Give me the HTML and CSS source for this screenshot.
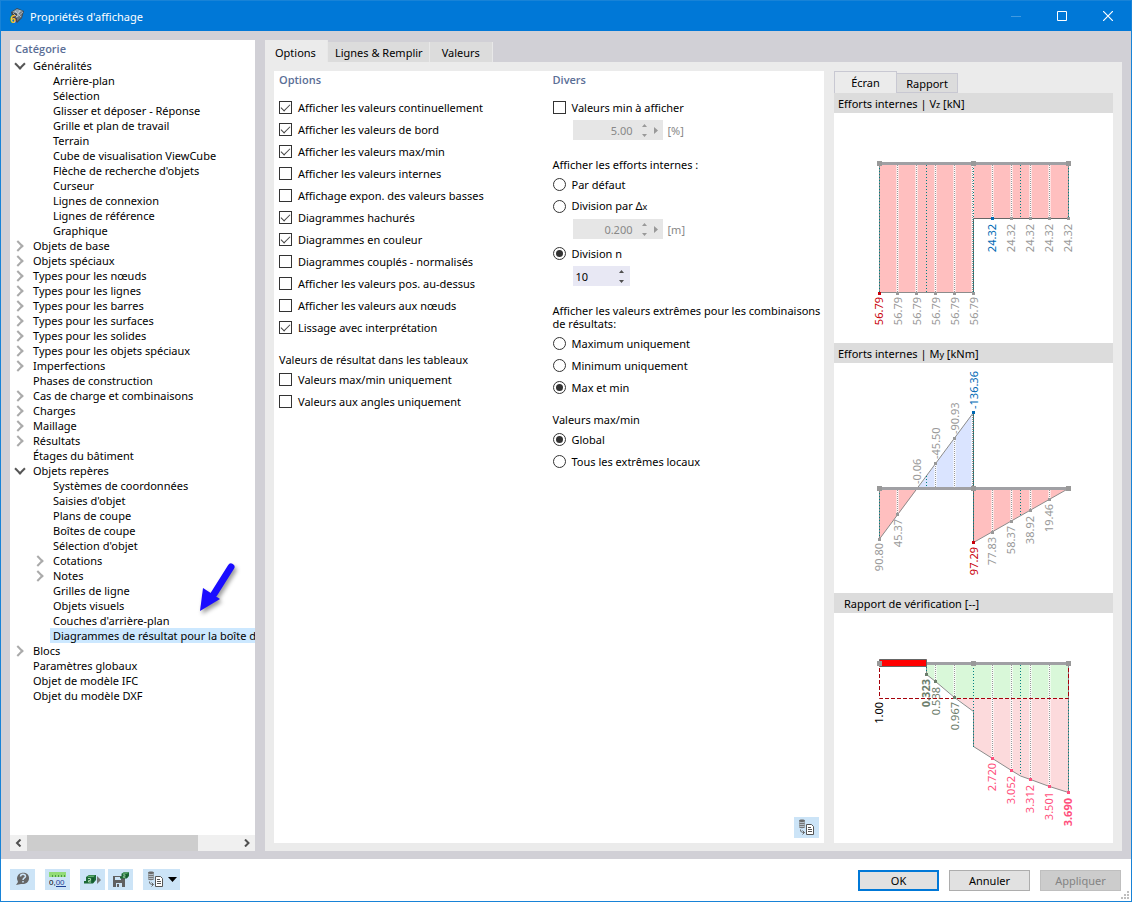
FILE: index.html
```html
<!DOCTYPE html>
<html lang="fr">
<head>
<meta charset="utf-8">
<title>Propriétés d'affichage</title>
<link rel="stylesheet" href="styles.css">
</head>
<body>
<svg class="sprites" aria-hidden="true">
  <symbol id="copy" viewBox="0 0 17 17">
    <path d="M1 1.500C1 0 7 0 7 1.500V8C7 9.500 1 9.500 1 8z" fill="#6a6a6a"/>
    <path d="M1 3q3 1.500 6 0M1 5q3 1.500 6 0M1 7q3 1.500 6 0" stroke="#d5e6f3" stroke-width=".8" fill="none"/>
    <path d="M2.500 10.500c0 2.500 1 3 4 3M4.500 11.500l2 2-2 2" fill="none" stroke="#666"/>
    <path d="M8.500 5.500h5l2 2v8h-7z" fill="#fff" stroke="#555"/>
    <path d="M10 8.500h3M10 10.500h4M10 12.500h4" stroke="#555"/>
  </symbol>
  <symbol id="cube" viewBox="0 0 12 9">
    <path d="M2 2l3-2h7v5L9 8.500H0V6h2z" fill="#1c6b38"/>
    <path d="M3 2l2.500-1.500H11L9.500 2z" fill="#5fae6d"/>
    <path d="M4 3.500h2.500v2H4.500V7H7" stroke="#a8d8ad" fill="none"/>
    <path d="M9 3v4.500" stroke="#0d4d22"/>
  </symbol>
</svg>
<div class="window">
  <header class="titlebar">
    <svg class="app-icon" viewBox="0 0 16 16"><path d="M2 4l6-4 7 3-2 7-5 5-5-6z" fill="#3d4750"/><path d="M3 4l5-3 6 2-5 3z" fill="#94a6b3"/><path d="M8 6l6-3-1.500 6.500L8 13z" fill="#66747f"/><path d="M4 5l4 4M6 3l6 6M11 2l-4 8M14 4L8 9" stroke="#dbe4ea" stroke-width=".6"/><text x="1" y="15" class="app-digit">6</text></svg>
    <h1 class="title">Propriétés d'affichage</h1>
    <button class="win-btn" aria-label="Réduire"><svg viewBox="0 0 10 10"><path d="M0 5.500h10" stroke="#409ae1"/></svg></button>
    <button class="win-btn" aria-label="Agrandir"><svg viewBox="0 0 10 10"><path d="M.5.500h9v9h-9z" fill="none" stroke="#fff"/></svg></button>
    <button class="win-btn" aria-label="Fermer"><svg viewBox="0 0 10 10"><path d="M0 0l10 10M10 0L0 10" stroke="#fff" stroke-width="1.200"/></svg></button>
  </header>

  <main class="content">
    <nav class="category">
      <h2 class="heading">Catégorie</h2>
      <ul class="tree">
        <li class="open">Généralités
          <ul>
            <li>Arrière-plan</li><li>Sélection</li><li>Glisser et déposer - Réponse</li><li>Grille et plan de travail</li><li>Terrain</li><li>Cube de visualisation ViewCube</li><li>Flèche de recherche d'objets</li><li>Curseur</li><li>Lignes de connexion</li><li>Lignes de référence</li><li>Graphique</li>
          </ul>
        </li>
        <li class="closed">Objets de base</li>
        <li class="closed">Objets spéciaux</li>
        <li class="closed">Types pour les nœuds</li>
        <li class="closed">Types pour les lignes</li>
        <li class="closed">Types pour les barres</li>
        <li class="closed">Types pour les surfaces</li>
        <li class="closed">Types pour les solides</li>
        <li class="closed">Types pour les objets spéciaux</li>
        <li class="closed">Imperfections</li>
        <li>Phases de construction</li>
        <li class="closed">Cas de charge et combinaisons</li>
        <li class="closed">Charges</li>
        <li class="closed">Maillage</li>
        <li class="closed">Résultats</li>
        <li>Étages du bâtiment</li>
        <li class="open">Objets repères
          <ul>
            <li>Systèmes de coordonnées</li><li>Saisies d'objet</li><li>Plans de coupe</li><li>Boîtes de coupe</li><li>Sélection d'objet</li><li class="closed">Cotations</li><li class="closed">Notes</li><li>Grilles de ligne</li><li>Objets visuels</li><li>Couches d'arrière-plan</li><li class="selected">Diagrammes de résultat pour la boîte d</li>
          </ul>
        </li>
        <li class="closed">Blocs</li>
        <li>Paramètres globaux</li>
        <li>Objet de modèle IFC</li>
        <li>Objet du modèle DXF</li>
      </ul>
      <svg class="pointer" viewBox="0 0 44 60" aria-hidden="true"><path d="M36 9L19 36" stroke="#1a0dff" stroke-width="7" stroke-linecap="round"/><path d="M5 53L8 30l17 11z" fill="#1a0dff"/></svg>
      <div class="hscroll">
        <button class="scroll-btn" aria-label="Défiler à gauche"><svg viewBox="0 0 8 8"><path d="M5.500.500L2 4l3.500 3.500" /></svg></button>
        <div class="track"><div class="thumb"></div></div>
        <button class="scroll-btn" aria-label="Défiler à droite"><svg viewBox="0 0 8 8"><path d="M2 .500L5.500 4 2 7.500" /></svg></button>
      </div>
    </nav>

    <section class="settings">
      <div class="tabs" role="tablist">
        <button class="tab active" role="tab">Options</button><button class="tab" role="tab">Lignes &amp; Remplir</button><button class="tab tab-last" role="tab">Valeurs</button>
      </div>
      <div class="page">
        <div class="form">
          <div class="col">
            <h2 class="heading">Options</h2>
            <label class="opt"><input type="checkbox" checked>Afficher les valeurs continuellement</label>
            <label class="opt"><input type="checkbox" checked>Afficher les valeurs de bord</label>
            <label class="opt"><input type="checkbox" checked>Afficher les valeurs max/min</label>
            <label class="opt"><input type="checkbox">Afficher les valeurs internes</label>
            <label class="opt"><input type="checkbox">Affichage expon. des valeurs basses</label>
            <label class="opt"><input type="checkbox" checked>Diagrammes hachurés</label>
            <label class="opt"><input type="checkbox" checked>Diagrammes en couleur</label>
            <label class="opt"><input type="checkbox">Diagrammes couplés - normalisés</label>
            <label class="opt"><input type="checkbox">Afficher les valeurs pos. au-dessus</label>
            <label class="opt"><input type="checkbox">Afficher les valeurs aux nœuds</label>
            <label class="opt"><input type="checkbox" checked>Lissage avec interprétation</label>
            <p class="caption">Valeurs de résultat dans les tableaux</p>
            <label class="opt"><input type="checkbox">Valeurs max/min uniquement</label>
            <label class="opt"><input type="checkbox">Valeurs aux angles uniquement</label>
          </div>
          <div class="col">
            <h2 class="heading">Divers</h2>
            <label class="opt"><input type="checkbox">Valeurs min à afficher</label>
            <div class="field"><span class="spin off"><input type="text" value="5.00" disabled aria-label="Valeurs min à afficher"><svg viewBox="0 0 20 16"><path d="M2 5l2.500-3L7 5zM2 12l2.500 3L7 12zM14 5l4 3.500-4 3.500z"/></svg></span><span class="unit">[%]</span></div>
            <p class="caption after-field">Afficher les efforts internes :</p>
            <label class="opt"><input type="radio" name="div">Par défaut</label>
            <label class="opt"><input type="radio" name="div"><span>Division par Δ<small>x</small></span></label>
            <div class="field"><span class="spin off"><input type="text" value="0.200" disabled aria-label="Division par Δx"><svg viewBox="0 0 20 16"><path d="M2 5l2.500-3L7 5zM2 12l2.500 3L7 12zM14 5l4 3.500-4 3.500z"/></svg></span><span class="unit">[m]</span></div>
            <label class="opt spaced"><input type="radio" name="div" checked>Division n</label>
            <div class="field"><span class="spin"><input type="text" value="10" aria-label="Division n"><svg viewBox="0 0 14 16"><path d="M3 5l2.500-3L8 5zM3 12l2.500 3L8 12z"/></svg></span></div>
            <p class="caption long">Afficher les valeurs extrêmes pour les combinaisons<br>de résultats:</p>
            <label class="opt"><input type="radio" name="ext">Maximum uniquement</label>
            <label class="opt"><input type="radio" name="ext">Minimum uniquement</label>
            <label class="opt"><input type="radio" name="ext" checked>Max et min</label>
            <p class="caption">Valeurs max/min</p>
            <label class="opt"><input type="radio" name="loc" checked>Global</label>
            <label class="opt"><input type="radio" name="loc">Tous les extrêmes locaux</label>
          </div>
          <button class="tool copy-btn" aria-label="Copier"><svg class="i17"><use href="#copy"/></svg></button>
        </div>

        <div class="preview">
          <div class="ptabs" role="tablist">
            <button class="ptab active" role="tab">Écran</button><button class="ptab" role="tab">Rapport</button>
          </div>
          <h3 class="phead">Efforts internes | V<small>z</small> [kN]</h3>
          <svg class="chart" viewBox="834 113 279 230">
            <path class="pink" d="M879 163h190v55h-95v75h-95z"/>
            <g class="base"><path d="M897.500 165v128M916.500 165v128M935.500 165v128M954.500 165v128M972.500 165v128M992.500 165v53M1011.500 165v53M1030.500 165v53M1049.500 165v53"/></g>
            <g class="dots"><path d="M897.500 165v128M916.500 165v128M935.500 165v128M954.500 165v128M972.500 165v128M992.500 165v53M1011.500 165v53M1030.500 165v53M1049.500 165v53"/></g>
            <path class="line" d="M879.500 163v130M1068.500 163v55M879 292.500h95"/>
            <path class="line dark" d="M973.500 293V218.500H1069"/>
            <path class="teal" d="M879.500 165v128M926.500 165v128M973.500 165v128M1020.500 165v53M1068.500 165v53"/>
            <path class="beam" d="M879 163.500h190"/>
            <path class="node" d="M877 161h5v5h-5zM971 161h5v5h-5zM1066 161h5v5h-5zM896 292h3v3h-3zM915 292h3v3h-3zM934 292h3v3h-3zM953 292h3v3h-3zM972 292h3v3h-3zM1010 217h3v3h-3zM1029 217h3v3h-3zM1048 217h3v3h-3zM1067 217h3v3h-3z"/>
            <path fill="#c8000a" d="M878 292h3v3h-3z"/><path fill="#0069b4" d="M991 217h3v3h-3z"/>
            <g class="vals end">
              <text class="red" transform="translate(883 297)rotate(-90)">56.79</text>
              <text transform="translate(902 297)rotate(-90)">56.79</text>
              <text transform="translate(921 297)rotate(-90)">56.79</text>
              <text transform="translate(940 297)rotate(-90)">56.79</text>
              <text transform="translate(959 297)rotate(-90)">56.79</text>
              <text transform="translate(978 297)rotate(-90)">56.79</text>
              <text class="blue" transform="translate(996 224)rotate(-90)">24.32</text>
              <text transform="translate(1015 224)rotate(-90)">24.32</text>
              <text transform="translate(1034 224)rotate(-90)">24.32</text>
              <text transform="translate(1053 224)rotate(-90)">24.32</text>
              <text transform="translate(1072 224)rotate(-90)">24.32</text>
            </g>
          </svg>
          <h3 class="phead">Efforts internes | M<small>y</small> [kNm]</h3>
          <svg class="chart" viewBox="834 363 279 230">
            <path class="pink" d="M879.500 488.500h38l-38 50.500zM973.500 488.500h95l-95 54z"/>
            <path fill="#dae4ff" d="M917.500 488.500l56-76v76z"/>
            <g class="base"><path d="M897.500 490v24M935.500 464v24M954.500 439v49M972.500 415v73M992.500 490v42M1011.500 490v31M1030.500 490v20M1049.500 490v9"/></g>
            <g class="dots"><path d="M897.500 490v24M935.500 464v24M954.500 439v49M972.500 415v73M992.500 490v42M1011.500 490v31M1030.500 490v20M1049.500 490v9"/></g>
            <path class="line" d="M879.500 488v51M879.500 539L973.500 412.500M973.500 542.500L1068.500 488.500"/>
            <path class="line dark" d="M973.500 412v131"/>
            <path class="teal" d="M879.500 490v49M926.500 476v12M973.500 412v131M1020.500 490v26"/>
            <path class="beam" d="M879 488.500h190"/>
            <path class="node" d="M877 486h5v5h-5zM971 486h5v5h-5zM1066 486h5v5h-5zM878 538h3v3h-3zM896 513h3v3h-3zM934 462h3v3h-3zM953 437h3v3h-3zM991 531h3v3h-3zM1010 520h3v3h-3zM1029 509h3v3h-3zM1048 498h3v3h-3z"/>
            <path fill="#c8000a" d="M972 541h3v3h-3z"/><path fill="#0069b4" d="M972 411h3v3h-3z"/>
            <g class="vals">
              <text transform="translate(921 484)rotate(-90)">-0.06</text>
              <text transform="translate(940 459)rotate(-90)">-45.50</text>
              <text transform="translate(959 434)rotate(-90)">-90.93</text>
              <text class="blue" transform="translate(978 409)rotate(-90)">-136.36</text>
            </g>
            <g class="vals end">
              <text transform="translate(883 543)rotate(-90)">90.80</text>
              <text transform="translate(902 519)rotate(-90)">45.37</text>
              <text class="red" transform="translate(978 547)rotate(-90)">97.29</text>
              <text transform="translate(996 537)rotate(-90)">77.83</text>
              <text transform="translate(1015 526)rotate(-90)">58.37</text>
              <text transform="translate(1034 516)rotate(-90)">38.92</text>
              <text transform="translate(1053 504)rotate(-90)">19.46</text>
            </g>
          </svg>
          <h3 class="phead indent">Rapport de vérification [--]</h3>
          <svg class="chart" viewBox="834 613 279 230">
            <path fill="#d9f8d9" d="M926.500 664h142v34.500H957L935.500 681.500l-9-7z"/>
            <path fill="#fcdadc" d="M957 698.500h111.500v94l-19-6-19-7-10-3.500-9-5.500-19-12-19-12v-35z"/>
            <g class="base"><path d="M935.500 665v16M954.500 665v32M992.500 665v93M1011.500 665v105M1030.500 665v114M1049.500 665v121"/></g>
            <g class="dots"><path d="M935.500 665v16M954.500 665v32M992.500 665v93M1011.500 665v105M1030.500 665v114M1049.500 665v121"/></g>
            <path class="line" d="M926.500 665v9.500l9 7 19 16 19 14v35l19 12 19 12 9 5.500 10 3.500 19 7 19 6V665"/>
            <path class="teal" d="M926.500 667v8M973.500 665v82M1020.500 665v111M1068.500 665v128"/>
            <path d="M879.500 668v30.500h189V667" fill="none" stroke="#a5000a" stroke-dasharray="4 2"/>
            <path class="beam" d="M927 663.500h142"/>
            <path d="M879.500 659.500h47v7h-47z" fill="red" stroke="#666"/>
            <path class="node" d="M877 661h5v5h-5zM971 661h5v5h-5zM1066 661h5v5h-5z"/>
            <path fill="#6c7d6c" d="M925 673h3v3h-3zM934 680h3v3h-3zM953 696h3v3h-3z"/>
            <path fill="#ff507d" d="M991 757h3v3h-3zM1010 769h3v3h-3zM1029 778h3v3h-3zM1048 785h3v3h-3zM1067 791h3v3h-3z"/>
            <g class="vals end">
              <text class="black" transform="translate(883 702)rotate(-90)">1.00</text>
              <text class="olive bold" transform="translate(930 679)rotate(-90)">0.323</text>
              <text class="olive" transform="translate(940 687)rotate(-90)">0.538</text>
              <text class="olive" transform="translate(959 702)rotate(-90)">0.967</text>
              <text class="rose" transform="translate(996 763)rotate(-90)">2.720</text>
              <text class="rose" transform="translate(1015 776)rotate(-90)">3.052</text>
              <text class="rose" transform="translate(1034 785)rotate(-90)">3.312</text>
              <text class="rose" transform="translate(1053 792)rotate(-90)">3.501</text>
              <text class="rose bold" transform="translate(1072 798)rotate(-90)">3.690</text>
            </g>
          </svg>
        </div>
      </div>
    </section>
  </main>

  <footer class="footer">
    <button class="tool" aria-label="Aide"><svg class="i17" viewBox="0 0 17 17"><path d="M3 8C3 0 15 0 15 7c0 5-4 6.500-8 6l-5 1 2-3z" fill="#666"/><path d="M6.500 5.500c0-3 5-3 5 0 0 1.500-2.500 1.500-2.500 3.500M9 10v1.500" fill="none" stroke="#cce4f7" stroke-width="1.500"/></svg></button>
    <button class="tool gap" aria-label="Unités"><svg class="i17" viewBox="0 0 17 17"><path d="M0 1h17v5H0z" fill="#92dc78"/><path d="M3.500 4v2M6.500 4v2M9.500 4v2M12.500 4v2M15.500 4v2" stroke="#4c9a45"/><text x="0" y="14" class="units">0,<tspan fill="#1c3f94">00</tspan></text><path d="M7 15.500h10" stroke="#1c3f94"/></svg></button>
    <button class="tool gap" aria-label="Charger"><svg class="i17" viewBox="0 0 17 17"><use href="#cube" x="0" y="4" width="12" height="9"/><path d="M13 5l4 4-4 4z" fill="#777"/></svg></button>
    <button class="tool near" aria-label="Enregistrer"><svg class="i17" viewBox="0 0 17 17"><path d="M1 5h11l1 1v10H1z" fill="#606060"/><path d="M3 6h6v3H3zM4 12h6v4H4z" fill="#cce4f7"/><path d="M5 13h2v3H5z" fill="#606060"/><use href="#cube" x="8" y="1" width="9" height="7"/></svg></button>
    <button class="tool gap wide" aria-label="Modèle"><svg class="i17"><use href="#copy"/></svg><svg class="caret" viewBox="0 0 9 5"><path d="M0 0h9L4.500 5z"/></svg></button>
    <div class="actions">
      <button class="btn primary">OK</button>
      <button class="btn">Annuler</button>
      <button class="btn" disabled>Appliquer</button>
    </div>
    <svg class="grip" viewBox="0 0 8 8"><path d="M6 0h2v2H6zM3 3h2v2H3zM6 3h2v2H6zM0 6h2v2H0zM3 6h2v2H3zM6 6h2v2H6z" fill="#bfbfbf"/></svg>
  </footer>
</div>
</body>
</html>
```
FILE: styles.css
```css
* { box-sizing: border-box; }
body { margin: 0; font: 11px/15px "Noto Sans", "Open Sans", sans-serif; color: #000; }
button, input { font: inherit; color: inherit; margin: 0; padding: 0; border: 0; border-radius: 0; }
ul { list-style: none; margin: 0; padding: 0; }
h1, h2, h3, p { margin: 0; font: inherit; }
svg { display: block; }
small { font-size: 9px; }
.sprites { position: absolute; width: 0; height: 0; }

.window { display: flex; flex-direction: column; min-height: 100vh; border: 1px solid #1883d7; background: #d1d0d6; }

.titlebar { display: flex; align-items: center; height: 30px; padding-left: 8px; background: #0078d7; color: #fff; }
.app-icon { width: 16px; height: 16px; overflow: visible; }
.app-digit { font: bold 10px "Noto Sans", sans-serif; fill: #f5c22c; }
.title { flex: 1; margin-left: 5px; }
.win-btn { display: flex; align-items: center; justify-content: center; width: 46px; height: 30px; background: none; }
.win-btn svg { width: 10px; height: 10px; }

.content { flex: 1; display: flex; gap: 10px; padding: 9px 9px 8px; }

.category { position: relative; display: flex; flex-direction: column; width: 245px; background: #fff; overflow: hidden; }
.heading { font-weight: 600; color: #5a6e96; line-height: 18px; font-family: "Open Sans", "Noto Sans", sans-serif; }
.category .heading { padding-left: 5px; }
.tree { position: relative; z-index: 0; flex: 1; }
.tree li { position: relative; padding-left: 23px; white-space: nowrap; }
.tree li li { margin-left: -3px; }
.tree .selected::before { content: ""; position: absolute; z-index: -1; inset: 0 0 0 20px; background: #cce8ff; }
.open::before, .closed::before { content: ""; position: absolute; width: 6px; height: 6px; border: solid #555; border-width: 0 2px 2px 0; transform: rotate(45deg); left: 6px; top: 2px; }
.closed::before { border-color: #aaa; transform: rotate(-45deg); left: 4px; top: 4px; }
.pointer { position: absolute; left: 185px; top: 518px; width: 44px; height: 60px; filter: drop-shadow(2px 3px 2px #999); }
.hscroll { display: flex; height: 16px; background: #f0f0f0; }
.scroll-btn { display: flex; align-items: center; justify-content: center; width: 17px; background: none; }
.scroll-btn svg { width: 8px; height: 8px; fill: none; stroke: #505050; stroke-width: 2; }
.track { flex: 1; }
.thumb { width: 81%; height: 100%; background: #cdcdcd; }

.settings { flex: 1; display: flex; flex-direction: column; }
.tabs { display: flex; align-items: flex-end; height: 22px; }
.tab { height: 20px; padding: 0 6px 0 7px; background: #dcdcdc; border-right: 1px solid #e8e8e8; }
.tab.active { height: 22px; padding: 2px 11px 0 10px; background: #ebebeb; }
.tab-last { padding: 0 12px; }
.page { flex: 1; display: flex; gap: 10px; padding: 9px 9px 8px; background: #ebebeb; }

.form { position: relative; flex: 1; display: flex; padding-left: 5px; background: #fff; }
.col { flex: 1 1 0; }
.col:last-of-type { white-space: nowrap; }
.col + .col { padding-left: 2px; }
.form .heading { margin-bottom: 7px; }
.opt { display: flex; align-items: center; height: 22px; }
.opt input { appearance: none; flex: none; width: 13px; height: 13px; margin-right: 6px; border: 1px solid #333; background: #fff; }
.opt input[type="radio"] { border-radius: 50%; }
.opt input[type="checkbox"]:checked::before { content: ""; display: block; width: 8px; height: 4px; margin: 2px 0 0 1px; border: solid #444; border-width: 0 0 1px 1px; transform: rotate(-45deg); }
.opt input[type="radio"]:checked::before { content: ""; display: block; width: 7px; height: 7px; margin: 2px; border-radius: 50%; background: #333; }
.caption { margin-top: 13px; line-height: 17px; }
.after-field { margin-top: 16px; }
.long { margin: 18px 0 2px; line-height: 13px; }
.spaced { margin-top: 3px; }
.field { display: flex; align-items: center; height: 20px; margin: 2px 0 0 20px; color: #888; }
.spin { display: flex; align-items: center; width: 57px; height: 20px; background: #e8e8f4; color: #000; }
.spin input { width: 43px; height: 20px; padding-left: 3px; background: none; }
.spin svg { width: 14px; height: 16px; fill: #505050; }
.spin.off { width: 90px; background: #e6e6e6; color: #888; }
.spin.off input { width: 60px; padding: 0; text-align: right; }
.spin.off svg { width: 20px; fill: #999; margin-left: 7px; }
.unit { margin-left: 5px; }

.preview { width: 279px; display: flex; flex-direction: column; }
.ptabs { display: flex; align-items: flex-end; height: 22px; }
.ptab { width: 62px; height: 20px; background: #dcdcdc; border: 1px solid #c8c8d2; }
.ptab.active { width: 63px; height: 22px; background: #ebebeb; border-bottom: 0; margin-right: -1px; }
.phead { height: 20px; padding-left: 4px; background: #dcdcdc; line-height: 21px; }
.phead small { line-height: 1; }
.indent { padding-left: 10px; }
.chart { flex: 1; width: 100%; height: 230px; background: #fff; }
.pink { fill: #ffbfbf; }
.base { stroke: #fff; stroke-width: 2; fill: none; }
.dots { stroke: #999; stroke-dasharray: 1 1; fill: none; }
.line { stroke: #8c8c8c; fill: none; }
.line.dark { stroke: #666; }
.teal { stroke: #008080; stroke-dasharray: 1 2; fill: none; }
.beam { stroke: #a0a0a4; stroke-width: 3; }
.node { fill: #999; }
.vals text { font-size: 11px; fill: #999; }
.vals.end text { text-anchor: end; }
.vals .red { fill: #c8000a; }
.vals .blue { fill: #0069b4; }
.vals .olive { fill: #6c7d6c; }
.vals .rose { fill: #ff507d; }
.vals .black { fill: #000; }
.vals .bold { font-weight: bold; }

.footer { position: relative; display: flex; align-items: flex-start; height: 42px; padding: 10px 10px 0 9px; background: #fff; }
.tool { display: flex; align-items: center; justify-content: center; width: 25px; height: 21px; background: #cce4f7; }
.i17 { width: 17px; height: 17px; }
.gap { margin-left: 10px; }
.near { margin-left: 3px; }
.wide { width: 37px; gap: 4px; }
.caret { width: 9px; height: 5px; }
.units { font: 8px "Liberation Sans", sans-serif; }
.copy-btn { position: absolute; right: 5px; bottom: 5px; }
.actions { display: flex; gap: 10px; margin: 1px 0 0 auto; }
.btn { width: 81px; height: 21px; background: #e1e1e1; border: 1px solid #adadad; }
.btn.primary { border: 2px solid #0078d7; }
.btn:disabled { background: #ccc; border-color: #bfbfbf; color: #838383; }
.grip { position: absolute; right: 2px; bottom: 2px; width: 8px; height: 8px; }
```
